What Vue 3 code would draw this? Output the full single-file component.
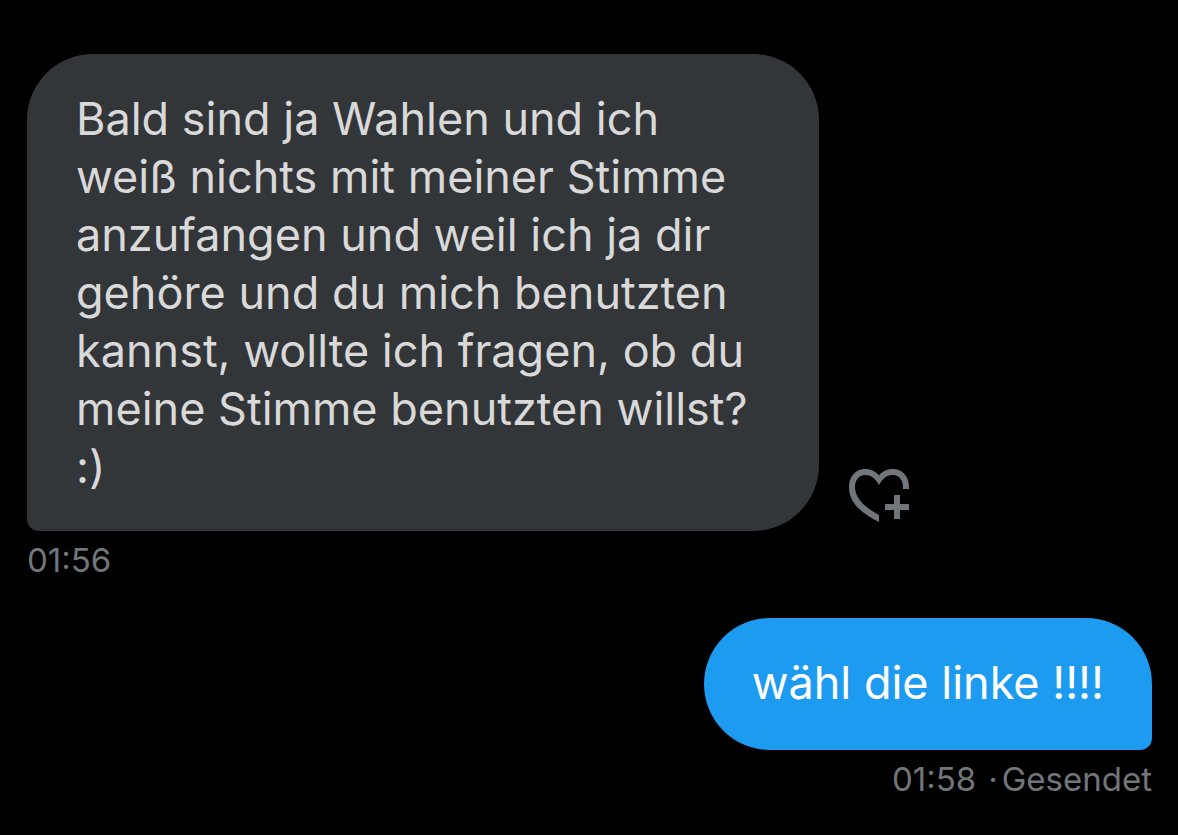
<script setup>
const received = {
  lines: [
    'Bald sind ja Wahlen und ich',
    'weiß nichts mit meiner Stimme',
    'anzufangen und weil ich ja dir',
    'gehöre und du mich benutzten',
    'kannst, wollte ich fragen, ob du',
    'meine Stimme benutzten willst?',
    ':)',
  ],
  time: '01:56',
}
const sent = { text: 'wähl die linke !!!!', time: '01:58', status: 'Gesendet' }
</script>

<template>
  <main class="chat">
    <article class="message incoming">
      <div class="row">
        <p class="bubble">
          <template v-for="(line, i) in received.lines" :key="i">{{ line }}<br v-if="i < received.lines.length - 1"></template>
        </p>
        <button class="react" type="button" aria-label="Reagieren">
          <svg viewBox="0 0 60 56" width="60" height="56" fill="#71767b">
            <path d="M30 53C11 43.500 0 33 0 18C0 7 7 0 16 0C22 0 27 2.500 30 6.500C33 2.500 38 0 44 0C53 0 60 7 60 18V20H54V18C54 11 50 6 44 6C38 6 34 9 30 16C26 9 22 6 16 6C10 6 6 11 6 18C6 28 14 37.500 30 46Z" />
            <path d="M45 26H51V35H60V41H51V50H45V41H36V35H45Z" />
          </svg>
        </button>
      </div>
      <time class="meta">{{ received.time }}</time>
    </article>
    <article class="message outgoing">
      <p class="bubble">{{ sent.text }}</p>
      <footer class="meta"><time>{{ sent.time }}</time><span class="dot">·</span><span>{{ sent.status }}</span></footer>
    </article>
  </main>
</template>

<style scoped>
.chat {
  display: flex;
  flex-direction: column;
  gap: 35px;
  box-sizing: border-box;
  min-height: 100vh;
  padding: 54px 26px 32px 27px;
  background: #000;
  font-family: "Inter", "Liberation Sans", sans-serif;
}
.message {
  display: flex;
  flex-direction: column;
  align-items: flex-start;
  gap: 6px;
}
.outgoing {
  align-items: flex-end;
}
.row {
  display: flex;
  align-items: flex-end;
  gap: 30px;
}
.bubble {
  margin: 0;
  padding: 36px 71px 35px 49px;
  border-radius: 66px 66px 66px 12px;
  background: #333639;
  color: #d9d9d9;
  font-size: 45px;
  line-height: 58px;
}
.outgoing .bubble {
  padding: 36px 48px 38px;
  border-radius: 66px 66px 12px 66px;
  background: #1d9bf0;
  color: #fff;
}
.react {
  display: flex;
  padding: 0;
  margin-bottom: 6px;
  border: 0;
  background: none;
  cursor: pointer;
}
.meta {
  display: flex;
  color: #71767b;
  font-size: 33px;
  line-height: 46px;
}
.dot {
  margin: 0 4px 0 12px;
}
</style>

<style>
body {
  background: #000;
}
</style>
